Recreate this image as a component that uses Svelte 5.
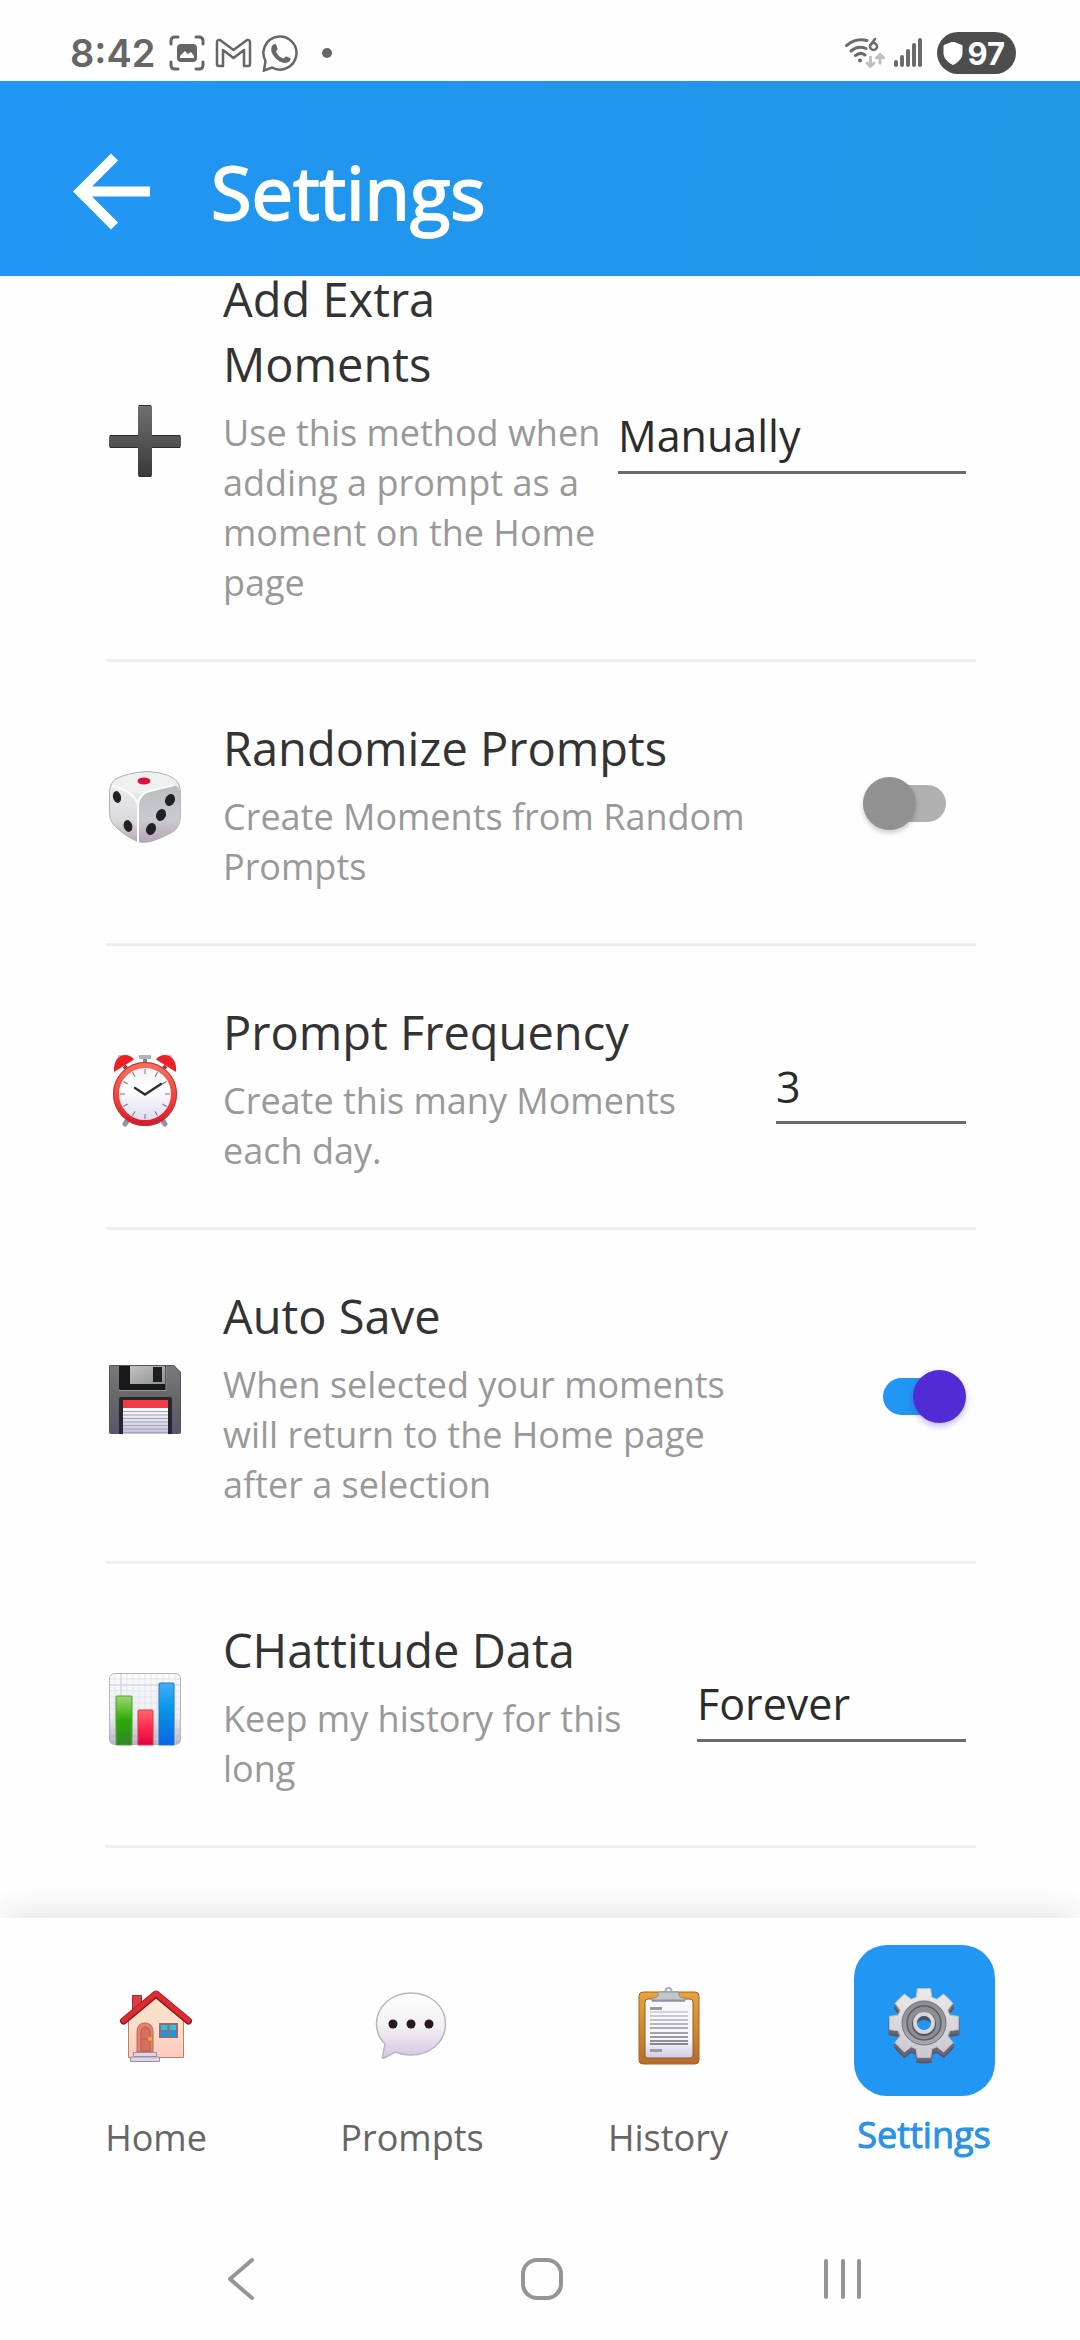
<script lang="ts">
	type Setting = {
		id: string;
		icon: string;
		title: string;
		hint: string;
		kind: 'select' | 'switch' | 'entry';
		size?: 'narrow' | 'medium' | 'wide';
		options?: string[];
	};

	const settings: Setting[] = [
		{
			id: 'extra-moments',
			icon: 'plus',
			title: 'Add Extra Moments',
			hint: 'Use this method when adding a prompt as a moment on the Home page',
			kind: 'select',
			size: 'wide',
			options: ['Manually', 'Automatically']
		},
		{
			id: 'randomize',
			icon: 'dice',
			title: 'Randomize Prompts',
			hint: 'Create Moments from Random Prompts',
			kind: 'switch'
		},
		{
			id: 'frequency',
			icon: 'clock',
			title: 'Prompt Frequency',
			hint: 'Create this many Moments each day.',
			kind: 'entry',
			size: 'narrow'
		},
		{
			id: 'auto-save',
			icon: 'floppy',
			title: 'Auto Save',
			hint: 'When selected your moments will return to the Home page after a selection',
			kind: 'switch'
		},
		{
			id: 'history-length',
			icon: 'chart',
			title: 'CHattitude Data',
			hint: 'Keep my history for this long',
			kind: 'select',
			size: 'medium',
			options: ['Forever', 'One Year', 'One Month']
		}
	];

	const tabs = [
		{ label: 'Home', icon: 'house' },
		{ label: 'Prompts', icon: 'bubble' },
		{ label: 'History', icon: 'clipboard' },
		{ label: 'Settings', icon: 'gear' }
	];

	let active = $state('Settings');
	let switches: Record<string, boolean> = $state({ randomize: false, 'auto-save': true });
	let frequency = $state('3');

	// eight teeth around (36, 34)
	function gearPath(cx: number, cy: number) {
		const points: string[] = [];
		for (let i = 0; i < 8; i++) {
			const mid = (i * Math.PI) / 4;
			for (const [offset, r] of [[-0.29, 27], [-0.19, 35], [0.19, 35], [0.29, 27]]) {
				const x = cx + r * Math.sin(mid + offset);
				const y = cy - r * Math.cos(mid + offset);
				points.push(`${x.toFixed(2)} ${y.toFixed(2)}`);
			}
		}
		return `M${points.join('L')}Z`;
	}

	const gear = gearPath(36, 34);
	const ticks = Array.from({ length: 12 }, (_, i) => i * 30);
	const gridLines = [6, 12, 18, 24, 30, 36, 42, 48, 54, 60, 66];
	const textLines = [22, 26, 30, 34, 38, 43, 47, 51, 54];
</script>

{#snippet art(name: string)}
	<svg class="art" viewBox="0 -8 72 80" aria-hidden="true">
		{#if name === 'plus'}
			<defs>
				<linearGradient id="plus-fill" x1="0" y1="0" x2="0" y2="1">
					<stop offset="0" stop-color="#707070" />
					<stop offset="1" stop-color="#393939" />
				</linearGradient>
			</defs>
			<path d="M31 0h10q2 0 2 2v28h27q2 0 2 2v9q0 2-2 2H43v27q0 2-2 2H31q-2 0-2-2V43H2q-2 0-2-2v-9q0-2 2-2h27V2q0-2 2-2z" fill="url(#plus-fill)" />
			<path d="M30 .5h12M1 30.500h28M43 30.500h28M1 42.500h28M43 42.500h28M30 71.500h12" stroke="#2c2c2c" />
		{:else if name === 'dice'}
			<defs>
				<linearGradient id="dice-body" x1="0" y1="0" x2="0" y2="1">
					<stop offset="0" stop-color="#f2f2f2" />
					<stop offset="0.7" stop-color="#dadadc" />
					<stop offset="1" stop-color="#b7a3b8" />
				</linearGradient>
				<linearGradient id="dice-side" x1="0" y1="0" x2="0" y2="1">
					<stop offset="0" stop-color="#b9bec1" />
					<stop offset="0.6" stop-color="#cacbce" />
					<stop offset="1" stop-color="#b6a2b8" />
				</linearGradient>
			</defs>
			<path d="M28 1.500Q38-.5 48 1.500C56 3 62 5 66 8.500 70 12 71.500 17 71.500 24V42c0 11-3 16-8 19-7 4-14 7-22 9.500-7 1.500-12 1-17-2-5-2.500-10-5.500-16-11C3 53 .5 49 .5 40V24C.5 16 2 11 7 8 12 5 20 3 28 1.500z" fill="url(#dice-body)" stroke="#aeaeb1" />
			<path d="M9 8.500Q18 4 30 2q8-1 18 1 9 2 15 5 5 4 1 7Q50 18 38 22q-8 2-16-1Q12 18 5 15q-1-4 4-6.500z" fill="#efefef" />
			<path d="M29 36q0-13 12-16l23-5.500q7 0 7.500 9V42c0 11-3 16-8 19-7 4-14 7-22 9.500Q29 73 29 68z" fill="url(#dice-side)" />
			<path d="M3 15q25 6 26 21v35M29 36q0-13 12-16l24-6" fill="none" stroke="#fdfdfd" stroke-width="2" />
			<ellipse cx="35" cy="10" rx="6.500" ry="3.500" fill="#dc0f3f" />
			<g fill="#222224">
				<ellipse cx="8" cy="26" rx="4" ry="6" transform="rotate(-14 8 26)" />
				<ellipse cx="19" cy="55" rx="4.300" ry="6" transform="rotate(-14 19 55)" />
				<ellipse cx="61" cy="29" rx="4.800" ry="6.200" transform="rotate(22 61 29)" />
				<ellipse cx="52" cy="44" rx="4.800" ry="6.200" transform="rotate(22 52 44)" />
				<ellipse cx="42" cy="58" rx="4.800" ry="6.200" transform="rotate(22 42 58)" />
			</g>
		{:else if name === 'clock'}
			<defs>
				<linearGradient id="clock-ring" x1="0" y1="0" x2="0" y2="1">
					<stop offset="0" stop-color="#f66d5c" />
					<stop offset="0.6" stop-color="#f0413c" />
					<stop offset="1" stop-color="#d51b2e" />
				</linearGradient>
				<linearGradient id="clock-face" x1="0" y1="0" x2="0" y2="1">
					<stop offset="0" stop-color="#f1f1f3" />
					<stop offset="0.4" stop-color="#fff" />
					<stop offset="1" stop-color="#dcdaf0" />
				</linearGradient>
			</defs>
			<path d="M20 63l-4 6M52 63l4 6" stroke="#9590a5" stroke-width="5" stroke-linecap="round" />
			<path d="M9 1h4M59 1h4" stroke="#c8c8c8" stroke-width="2" />
			<path d="M30 0h12v4H30z" fill="#aeb3b4" />
			<path d="M34 4h4v4h-4z" fill="#7f8687" />
			<path d="M15 11l5 5M57 11l-5 5" stroke="#7d4b4b" stroke-width="4" />
			<path d="M5 17C4 7 9 0 16 0q6 0 9 4.500Z" fill="#ee1f25" />
			<path d="M67 17C68 7 63 0 56 0q-6 0-9 4.500Z" fill="#ee1f25" />
			<circle cx="36" cy="39" r="29" fill="url(#clock-face)" stroke="url(#clock-ring)" stroke-width="6" />
			<circle cx="36" cy="39" r="31.500" fill="none" stroke="#c4302f" />
			{#each ticks as angle}
				<path d="M36 14v5" stroke="#8a6e78" transform="rotate({angle} 36 39)" />
			{/each}
			<path d="M26 33l10 6.500L52 29" fill="none" stroke="#2b3036" stroke-width="2.500" stroke-linecap="round" />
		{:else if name === 'floppy'}
			<defs>
				<linearGradient id="floppy-body" x1="0" y1="0" x2="0" y2="1">
					<stop offset="0" stop-color="#7a7a7e" />
					<stop offset="0.5" stop-color="#666669" />
					<stop offset="1" stop-color="#56566e" />
				</linearGradient>
				<linearGradient id="floppy-label" x1="0" y1="0" x2="0" y2="1">
					<stop offset="0" stop-color="#fff" />
					<stop offset="1" stop-color="#c2c0dc" />
				</linearGradient>
				<linearGradient id="floppy-metal" x1="0" y1="0" x2="1" y2="1">
					<stop offset="0" stop-color="#c3c3c0" />
					<stop offset="1" stop-color="#8f8f8c" />
				</linearGradient>
			</defs>
			<path d="M2 1h63l7 7v60q0 2-2 2H2q-2 0-2-2V3q0-2 2-2z" fill="url(#floppy-body)" />
			<path d="M.5 69V2q0-.5 1-.5h63l7 7V69" fill="none" stroke="#55555d" />
			<path d="M10 2h47v24H11l-1-1z" fill="#17191b" />
			<path d="M10 26.500h47V3" fill="none" stroke="#96969a" />
			<path d="M21 2h35v18H21z" fill="url(#floppy-metal)" />
			<path d="M44 3h9v15h-9z" fill="#1d2022" />
			<path d="M10 70V35q0-2 2-2h49q2 0 2 2v35z" fill="#26272b" />
			<path d="M14 36h45v8H14z" fill="#f03a45" />
			<path d="M14 44h45v26H14z" fill="url(#floppy-label)" />
			<path d="M14 47.500h45M14 51h45M14 54.500h45M14 58h45M14 61.500h45M14 65h45M14 68.500h45" stroke="#a3a2b6" />
		{:else if name === 'chart'}
			<defs>
				<linearGradient id="chart-paper" x1="0" y1="0" x2="0" y2="1">
					<stop offset="0" stop-color="#fbfbfd" />
					<stop offset="0.6" stop-color="#eeeef2" />
					<stop offset="1" stop-color="#b6adbf" />
				</linearGradient>
				<linearGradient id="chart-green" x1="0" y1="0" x2="0" y2="1">
					<stop offset="0" stop-color="#9fd673" />
					<stop offset="0.5" stop-color="#2cab03" />
					<stop offset="1" stop-color="#328428" />
				</linearGradient>
				<linearGradient id="chart-red" x1="0" y1="0" x2="0" y2="1">
					<stop offset="0" stop-color="#ff6a66" />
					<stop offset="0.5" stop-color="#ff2850" />
					<stop offset="1" stop-color="#e0043d" />
				</linearGradient>
				<linearGradient id="chart-blue" x1="0" y1="0" x2="0" y2="1">
					<stop offset="0" stop-color="#43aef8" />
					<stop offset="0.4" stop-color="#0798e6" />
					<stop offset="1" stop-color="#0766e5" />
				</linearGradient>
			</defs>
			<rect x="0.500" y="0.500" width="71" height="71" rx="5" fill="url(#chart-paper)" stroke="#b9b5bf" />
			{#each gridLines as n}
				<path d="M{n} 1v70M1 {n}h70" stroke="#d9dbe4" stroke-width="0.600" />
			{/each}
			<path d="M12 1v70M1 12h70" stroke="#cdd0dc" />
			<path d="M7 72V24q0-1 1-1h14q1 0 1 1v48z" fill="url(#chart-green)" stroke="#55a23c" />
			<path d="M29 72V38q0-1 1-1h13q1 0 1 1v34z" fill="url(#chart-red)" stroke="#d8384f" />
			<path d="M50 72V11q0-1 1-1h13q1 0 1 1v61z" fill="url(#chart-blue)" stroke="#2076c0" />
		{:else if name === 'house'}
			<defs>
				<linearGradient id="house-wall" x1="0" y1="0" x2="0" y2="1">
					<stop offset="0" stop-color="#f6dfc2" />
					<stop offset="0.5" stop-color="#fcdfcb" />
					<stop offset="1" stop-color="#ffc9bf" />
				</linearGradient>
			</defs>
			<path d="M12.500 5.500h9v13l-9 9z" fill="#dd3c46" stroke="#a0272e" />
			<path d="M8.500 67.500V29L36 5l27.500 24v38.500z" fill="url(#house-wall)" stroke="#b9835f" />
			<path d="M3.500 31 36 4 68.500 31" fill="none" stroke="#8f1218" stroke-width="7" stroke-linecap="round" stroke-linejoin="round" />
			<path d="M3.500 30.500 36 3.500 68.500 30.500" fill="none" stroke="#dc2c33" stroke-width="5" stroke-linecap="round" stroke-linejoin="round" />
			<path d="M17 62V42q0-9 8-9t8 9v20z" fill="#e38370" stroke="#b96a58" />
			<path d="M21 61V43q0-6 4.500-6t4.500 6v18zM21 49h9" fill="#d9705f" stroke="#b25c4c" />
			<circle cx="30" cy="49" r="2" fill="#f3a91d" />
			<path d="M39 33h19v15H39z" fill="#a4646b" />
			<path d="M41 35h6.500v5H41zM49.500 35H56v5h-6.500z" fill="#23c4ea" />
			<path d="M41 41.500h6.500v5H41zM49.500 41.500H56v5h-6.500z" fill="#0d9de8" />
			<path d="M13.500 62.500h23v4h-23zM10.500 67h29v4.500h-29z" fill="#ddd5e3" stroke="#9b90a2" />
		{:else if name === 'bubble'}
			<defs>
				<linearGradient id="bubble-fill" x1="0" y1="0" x2="0" y2="1">
					<stop offset="0" stop-color="#fff" />
					<stop offset="0.5" stop-color="#f3f1f3" />
					<stop offset="1" stop-color="#d6c5e8" />
				</linearGradient>
			</defs>
			<path d="M35 3c19 0 34.500 13 34.500 31S54 65 35 65c-6 0-11-1-15.500-3L8 68q-2 1-1.500-1L9 54C4 49 .5 42 .5 34 .5 16 16 3 35 3z" fill="url(#bubble-fill)" stroke="#bab6bd" stroke-width="1.500" />
			<circle cx="17" cy="34" r="4.500" fill="#261722" />
			<circle cx="35" cy="34" r="4.500" fill="#261722" />
			<circle cx="53" cy="34" r="4.500" fill="#261722" />
		{:else if name === 'clipboard'}
			<defs>
				<linearGradient id="clip-board" x1="0" y1="0" x2="0" y2="1">
					<stop offset="0" stop-color="#e7a33c" />
					<stop offset="0.5" stop-color="#d28a2b" />
					<stop offset="1" stop-color="#b66a2b" />
				</linearGradient>
				<linearGradient id="clip-paper" x1="0" y1="0" x2="0" y2="1">
					<stop offset="0" stop-color="#f8f8fb" />
					<stop offset="0.7" stop-color="#f6f6fa" />
					<stop offset="1" stop-color="#cfcbe2" />
				</linearGradient>
			</defs>
			<rect x="7" y="2" width="60" height="72" rx="4" fill="url(#clip-board)" stroke="#a8651f" />
			<rect x="13" y="9" width="48" height="59" rx="3" fill="url(#clip-paper)" stroke="#8e5d30" />
			<path d="M18 17h12v3H18zM18 59h12v3H18z" fill="#9a9aa2" />
			{#each textLines as y, i}
				<path d="M18 {y}h38" stroke="#80818a" stroke-width="2" opacity={0.3 + i * 0.080} />
			{/each}
			<circle cx="36.500" cy="1" r="3" fill="none" stroke="#aab0b5" stroke-width="2" />
			<path d="M20 11V8q5 0 6-2V3q0-1 2-1h17q2 0 2 1v3q1 2 6 2v3z" fill="#c2c7cb" stroke="#8d9398" />
			<path d="M20 10.500h33" stroke="#8a94a8" stroke-width="2" />
		{:else if name === 'gear'}
			<defs>
				<linearGradient id="gear-face" x1="0" y1="0" x2="0" y2="1">
					<stop offset="0" stop-color="#eaeaea" />
					<stop offset="1" stop-color="#cbc7d0" />
				</linearGradient>
				<linearGradient id="gear-well" x1="0" y1="0" x2="0" y2="1">
					<stop offset="0" stop-color="#8c8c90" />
					<stop offset="1" stop-color="#aaa7b1" />
				</linearGradient>
			</defs>
			<path d={gear} fill="#59556a" stroke="#59556a" stroke-width="2" stroke-linejoin="round" transform="translate(0 5)" />
			<path d={gear} fill="#6a6775" stroke="#6a6775" stroke-width="2" stroke-linejoin="round" transform="translate(0 3)" />
			<path d={gear} fill="url(#gear-face)" stroke="#c3c3c6" stroke-linejoin="round" />
			<circle cx="36" cy="34" r="22" fill="url(#gear-well)" stroke="#6f6f75" />
			<circle cx="36" cy="34" r="17" fill="#8e8d94" stroke="#5f5f66" stroke-width="1.500" />
			<circle cx="36" cy="35" r="12" fill="#55555d" />
			<circle cx="36" cy="34" r="9" fill="#2196f3" stroke="#d6d6d9" stroke-width="4" />
			<path d="M29 34a7 7 0 0 1 14 0q-3-3-7-3t-7 3z" fill="#4c5361" />
		{/if}
	</svg>
{/snippet}

<div class="screen">
	<div class="status">
		<span class="time">8:42</span>
		<svg class="status-icon" width="36" height="36" viewBox="0 0 36 36" fill="none" stroke="#666" stroke-width="3" stroke-linecap="round" aria-hidden="true">
			<path d="M2 9V6q0-4 4-4h3M27 2h3q4 0 4 4v3M34 27v3q0 4-4 4h-3M9 34H6q-4 0-4-4v-3" />
			<rect x="8" y="9" width="20" height="18" rx="4" fill="#666" stroke="none" />
			<path d="M11 23v-2l5-5 3 3 3-2 3 4v2z" fill="#fff" stroke="none" />
		</svg>
		<svg class="status-icon" width="37" height="36" viewBox="0 0 37 36" fill="none" stroke="#666" stroke-width="2.500" stroke-linejoin="round" aria-hidden="true">
			<path d="M2 7.500q0-3 3-2.500l13.500 10L32 5q3-.5 3 2.500V29q0 2-2 2h-4V15L18.500 23 8 15v16H4q-2 0-2-2z" />
		</svg>
		<svg class="status-icon" width="37" height="38" viewBox="0 0 37 38" aria-hidden="true">
			<path d="M3.500 27A16.500 16.500 0 1 1 10 33.500L2 36.500z" fill="none" stroke="#666" stroke-width="2.500" />
			<path d="M10 12c2-3 4-2 4.500-.5l1 3c.5 1-1 2-1.500 3 2 4 4 6 7.500 7 1-.5 2-2.500 3-2l3.500 1.500c1.500 1 0 3.500-2.500 4.500-4 1.500-9-1-12.500-5-4-4.500-4.500-8-3-11.500z" fill="#666" />
		</svg>
		<span class="dot"></span>

		<svg class="wifi" width="43" height="36" viewBox="0 0 43 36" fill="none" stroke="#6b6b6b" stroke-width="3" stroke-linecap="round" aria-hidden="true">
			<path d="M2.500 10.500Q12 2.500 23 5.500M7 16q7-6 15-2.500M11.500 20.500q5-4 9.500-.5" />
			<circle cx="16" cy="25.500" r="2" fill="#6b6b6b" stroke="none" />
			<circle cx="29.500" cy="11.500" r="3.500" stroke-width="2.500" />
			<path d="M26.500 10 31 4" stroke-width="2.500" />
			<path d="M26.500 22v9M23 28l3.500 3.500L30 28M36 28v-8M32.500 23l3.500-3.500 3.500 3.500" stroke="#c0c0c0" />
		</svg>
		<svg class="signal" width="28" height="30" viewBox="0 0 28 30" stroke="#6b6b6b" stroke-width="4" stroke-linecap="round" aria-hidden="true">
			<path d="M2 24v3M8 19v8M14 13v14M20 7v20M26 2v25" />
		</svg>
		<span class="battery">
			<svg width="20" height="23" viewBox="0 0 20 23" aria-hidden="true">
				<path d="M10 0l9 3.500V12q-1 7-9 10.500Q2 19 1 12V3.500z" fill="#fff" stroke="#fff" stroke-linejoin="round" />
			</svg>
			97
		</span>
	</div>

	<header>
		<button class="back" aria-label="Back">
			<svg width="78" height="78" viewBox="0 0 78 78" fill="none" stroke="#fff" stroke-width="10" aria-hidden="true">
				<path d="M41.500 4 7 38.500 41.500 73M7 38.500h70" />
			</svg>
		</button>
		<h1>Settings</h1>
	</header>

	<main>
		<div class="list">
			{#each settings as item (item.id)}
				<div class="row">
					{@render art(item.icon)}
					<label class="copy" for={item.id}>
						<span class="title">{item.title}</span>
						<span class="hint">{item.hint}</span>
					</label>
					{#if item.kind === 'switch'}
						<input
							id={item.id}
							class="switch"
							type="checkbox"
							role="switch"
							bind:checked={switches[item.id]}
						/>
					{:else if item.kind === 'entry'}
						<input id={item.id} class="field {item.size}" type="text" inputmode="numeric" bind:value={frequency} />
					{:else}
						<select id={item.id} class="field {item.size}">
							{#each item.options ?? [] as option}
								<option>{option}</option>
							{/each}
						</select>
					{/if}
				</div>
			{/each}
		</div>
	</main>

	<nav class="tabs">
		{#each tabs as tab}
			<button class="tab" class:active={active === tab.label} onclick={() => (active = tab.label)}>
				<span class="tile">{@render art(tab.icon)}</span>
				<span>{tab.label}</span>
			</button>
		{/each}
	</nav>

	<div class="system">
		<button aria-label="System back">
			<svg width="42" height="44" viewBox="0 0 42 44" aria-hidden="true">
				<path d="M32 3 10 22l22 19" />
			</svg>
		</button>
		<button aria-label="System home">
			<svg width="42" height="44" viewBox="0 0 42 44" aria-hidden="true">
				<rect x="2" y="3" width="38" height="38" rx="14" />
			</svg>
		</button>
		<button aria-label="Recent apps">
			<svg width="42" height="44" viewBox="0 0 42 44" aria-hidden="true">
				<path d="M4 4v36M21 4v36M37 4v36" />
			</svg>
		</button>
	</div>
</div>

<style>
	:global(body) {
		margin: 0;
		background: #fefefe;
	}

	.screen {
		display: flex;
		flex-direction: column;
		height: 100vh;
		overflow: hidden;
		font-family: 'Open Sans', 'Noto Sans', sans-serif;
		color: #333;
	}

	button {
		padding: 0;
		border: 0;
		background: none;
		font: inherit;
		color: inherit;
	}

	svg {
		display: block;
		flex: none;
	}

	/* phone status bar */
	.status {
		display: flex;
		align-items: center;
		box-sizing: border-box;
		height: 81px;
		padding: 25px 64px 0 70px;
		font-family: Inter, Roboto, sans-serif;
		color: #666;
	}

	.time {
		margin-right: 4px;
		font-size: 38px;
		font-weight: 600;
	}

	.status-icon {
		margin-left: 10px;
	}

	.dot {
		width: 10px;
		height: 10px;
		margin-left: 23px;
		border-radius: 50%;
		background: #666;
	}

	.wifi {
		margin-left: auto;
	}

	.signal {
		margin: 0 15px 0 7px;
	}

	.battery {
		display: flex;
		align-items: center;
		gap: 4px;
		box-sizing: border-box;
		height: 42px;
		padding: 0 11px 0 6px;
		border-radius: 21px;
		background: #4d4d4d;
		color: #fff;
		font-size: 31px;
		font-weight: 700;
	}

	header {
		position: relative;
		z-index: 1;
		display: flex;
		align-items: center;
		gap: 60px;
		box-sizing: border-box;
		height: 195px;
		padding: 27px 73px 0;
		background: linear-gradient(100deg, #2196f5, #2196ed 40%, #2196e4);
		color: #fff;
	}

	h1 {
		margin: 0;
		font-size: 74px;
		font-weight: 400;
		line-height: 100px;
		-webkit-text-stroke: 2px currentColor;
	}

	/* the list is scrolled to its end */
	main {
		display: flex;
		flex: 1;
		flex-direction: column;
		justify-content: flex-end;
		min-height: 0;
		padding: 0 104px 70px 106px;
	}

	.row {
		display: flex;
		align-items: center;
		padding: 52px 10px 51px 3px;
		border-bottom: 3px solid #eee;
	}

	.art {
		width: 72px;
		height: 80px;
		overflow: visible;
	}

	.copy {
		display: flex;
		flex: 1;
		flex-direction: column;
		gap: 11px;
		min-width: 0;
		margin: 2px 16px 0 42px;
	}

	.title {
		font-size: 47px;
		line-height: 65px;
	}

	.hint {
		font-size: 36px;
		line-height: 50px;
		color: #999;
	}

	.field {
		appearance: none;
		box-sizing: border-box;
		height: 74px;
		padding: 7px 0 6px;
		border: 0;
		border-bottom: 3px solid #6a6a6a;
		border-radius: 0;
		outline: 0;
		background: none;
		font-family: inherit;
		font-size: 43px;
		line-height: 58px;
		color: #2b2b2b;
	}

	.narrow {
		width: 190px;
	}

	.medium {
		width: 269px;
	}

	.wide {
		width: 348px;
	}

	.switch {
		appearance: none;
		display: flex;
		align-items: center;
		width: 83px;
		height: 37px;
		margin: 0 20px 0 100px;
		border-radius: 19px;
		background: linear-gradient(#b0b0b0, #b0b0b0) right / 73px 37px no-repeat;
	}

	.switch::before {
		content: '';
		width: 53px;
		height: 53px;
		border-radius: 50%;
		background: #919191;
		box-shadow: 0 3px 5px rgba(0, 0, 0, 0.2);
	}

	.switch:checked {
		justify-content: flex-end;
		margin-right: 0;
		background: linear-gradient(#2196f3, #2196f3) left / 73px 37px no-repeat;
	}

	.switch:checked::before {
		background: #512bd4;
		box-shadow: 0 3px 6px rgba(81, 43, 212, 0.35);
	}

	.tabs {
		position: relative;
		display: grid;
		grid-template-columns: repeat(4, 1fr);
		align-items: start;
		box-sizing: border-box;
		height: 300px;
		padding: 27px 28px 0;
		background: #fefefe;
		box-shadow: 0 0 40px rgba(0, 0, 0, 0.13);
	}

	.tab {
		display: flex;
		flex-direction: column;
		align-items: center;
		gap: 14px;
		font-size: 36px;
		line-height: 50px;
		color: #666;
	}

	.tile {
		display: grid;
		place-items: center;
		width: 141px;
		height: 154px;
		border-radius: 33px;
	}

	.active {
		color: #2b92e8;
		-webkit-text-stroke: 1px currentColor;
	}

	.active .tile {
		height: 151px;
		background: #2196f3;
	}

	.system {
		position: relative;
		display: grid;
		grid-template-columns: repeat(3, 1fr);
		place-items: center;
		box-sizing: border-box;
		height: 122px;
		padding: 0 86px 0 90px;
		background: #fefefe;
	}

	.system svg {
		fill: none;
		stroke: #959595;
		stroke-width: 4;
		stroke-linecap: round;
		stroke-linejoin: round;
	}
</style>
